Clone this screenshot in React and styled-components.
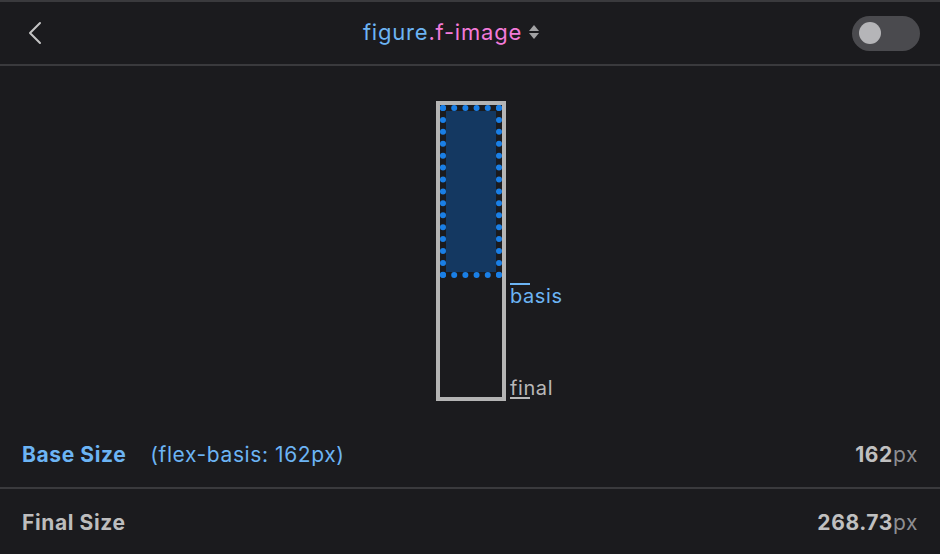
import React from 'react'
import styled, { createGlobalStyle } from 'styled-components'

const GlobalStyle = createGlobalStyle`
  html, body {
    margin: 0;
    padding: 0;
    background: #1b1b1e;
  }
  body {
    font-family: Inter, "Noto Sans", sans-serif;
    color: #bdbdbd;
  }
`

const Panel = styled.div`
  width: 940px;
  height: 554px;
  background: #1b1b1e;
  border-top: 2px solid #3a3a3d;
  box-sizing: border-box;
  display: flex;
  flex-direction: column;
  overflow: hidden;
`

const Header = styled.div`
  height: 62px;
  display: flex;
  align-items: center;
  border-bottom: 2px solid #3a3a3d;
`

const BackButton = styled.button`
  width: 51px;
  height: 100%;
  display: flex;
  align-items: center;
  justify-content: flex-end;
  padding: 0 8px 0 0;
  background: none;
  border: none;
  cursor: pointer;
`

const Title = styled.div`
  flex: 1;
  display: flex;
  align-items: center;
  justify-content: center;
  gap: 6px;
  font-size: 22px;
  letter-spacing: 0.8px;
  line-height: 1;
  padding-bottom: 2px;
`

const Tag = styled.span`
  color: ${p => p.$pink ? '#f37ad9' : '#6cb4f4'};
`

const Toggle = styled.div`
  width: 68px;
  height: 35px;
  margin-right: 20px;
  border-radius: 18px;
  background: #4a4a4e;
  display: flex;
  align-items: center;
  padding-left: 7px;
  box-sizing: border-box;
`

const Knob = styled.div`
  width: 22px;
  height: 22px;
  border-radius: 50%;
  background: #b5b5b8;
`

const Diagram = styled.div`
  height: 356px;
  box-sizing: border-box;
  padding: 35px 0 21px;
  display: flex;
  justify-content: center;
`

const OuterBox = styled.div`
  position: relative;
  width: 70px;
  height: 300px;
  box-sizing: border-box;
  border: 4px solid #b4b4b4;
  margin-left: 2px;
`

const BasisBox = styled.div`
  height: 173px;
  box-sizing: border-box;
  border: 6px dotted #1a7fe6;
  background: #143861;
  background-clip: padding-box;
`

const Mark = styled.span`
  position: absolute;
  left: calc(100% + 8px);
  font-size: 20px;
  letter-spacing: 0.6px;
  line-height: 20px;
  white-space: nowrap;
  color: ${p => p.$blue ? '#6cb4f4' : '#b8b8b8'};

  &::before {
    content: '';
    position: absolute;
    left: 0;
    width: 20px;
    height: 2px;
    background: currentColor;
  }
`

const BasisMark = styled(Mark)`
  top: 178px;
  padding-top: 3px;
  &::before { top: 0; }
`

const FinalMark = styled(Mark)`
  top: 273px;
  &::before { top: 19px; }
`

const Row = styled.div`
  height: 65px;
  box-sizing: border-box;
  display: flex;
  align-items: center;
  padding: ${p => p.$divided ? '3px 22px 0' : '0 22px'};
  font-size: 21px;
  letter-spacing: 0.6px;
  border-top: ${p => p.$divided ? '2px solid #3a3a3d' : 'none'};
`

const Label = styled.span`
  font-weight: 700;
  color: ${p => p.$blue ? '#6cb4f4' : '#bdbdbd'};
`

const Note = styled.span`
  margin-left: 24px;
  color: #6cb4f4;
`

const Value = styled.span`
  margin-left: auto;
  font-weight: 700;
  color: #c0c0c0;
`

const Unit = styled.span`
  font-weight: 400;
  color: #8e8e92;
`

const Chevron = () => (
  <svg width="16" height="24" viewBox="0 0 16 24" fill="none">
    <polyline points="13,2 3,12 13,22" stroke="#c4c4c4" strokeWidth="2" strokeLinecap="round" strokeLinejoin="round" />
  </svg>
)

const UpDown = () => (
  <svg width="12" height="16" viewBox="0 0 12 16">
    <polygon points="6,1 11,7 1,7" fill="#a2a2a4" />
    <polygon points="1,9 11,9 6,15" fill="#a2a2a4" />
  </svg>
)

export default function App() {
  return (
    <>
      <GlobalStyle />
      <Panel>
        <Header>
          <BackButton aria-label="Back">
            <Chevron />
          </BackButton>
          <Title>
            <span>
              <Tag>figure</Tag>
              <Tag $pink>.f-image</Tag>
            </span>
            <UpDown />
          </Title>
          <Toggle>
            <Knob />
          </Toggle>
        </Header>

        <Diagram>
          <OuterBox>
            <BasisBox />
            <BasisMark $blue>basis</BasisMark>
            <FinalMark>final</FinalMark>
          </OuterBox>
        </Diagram>

        <Row>
          <Label $blue>Base Size</Label>
          <Note>(flex-basis: 162px)</Note>
          <Value>162<Unit>px</Unit></Value>
        </Row>
        <Row $divided>
          <Label>Final Size</Label>
          <Value>268.73<Unit>px</Unit></Value>
        </Row>
      </Panel>
    </>
  )
}
